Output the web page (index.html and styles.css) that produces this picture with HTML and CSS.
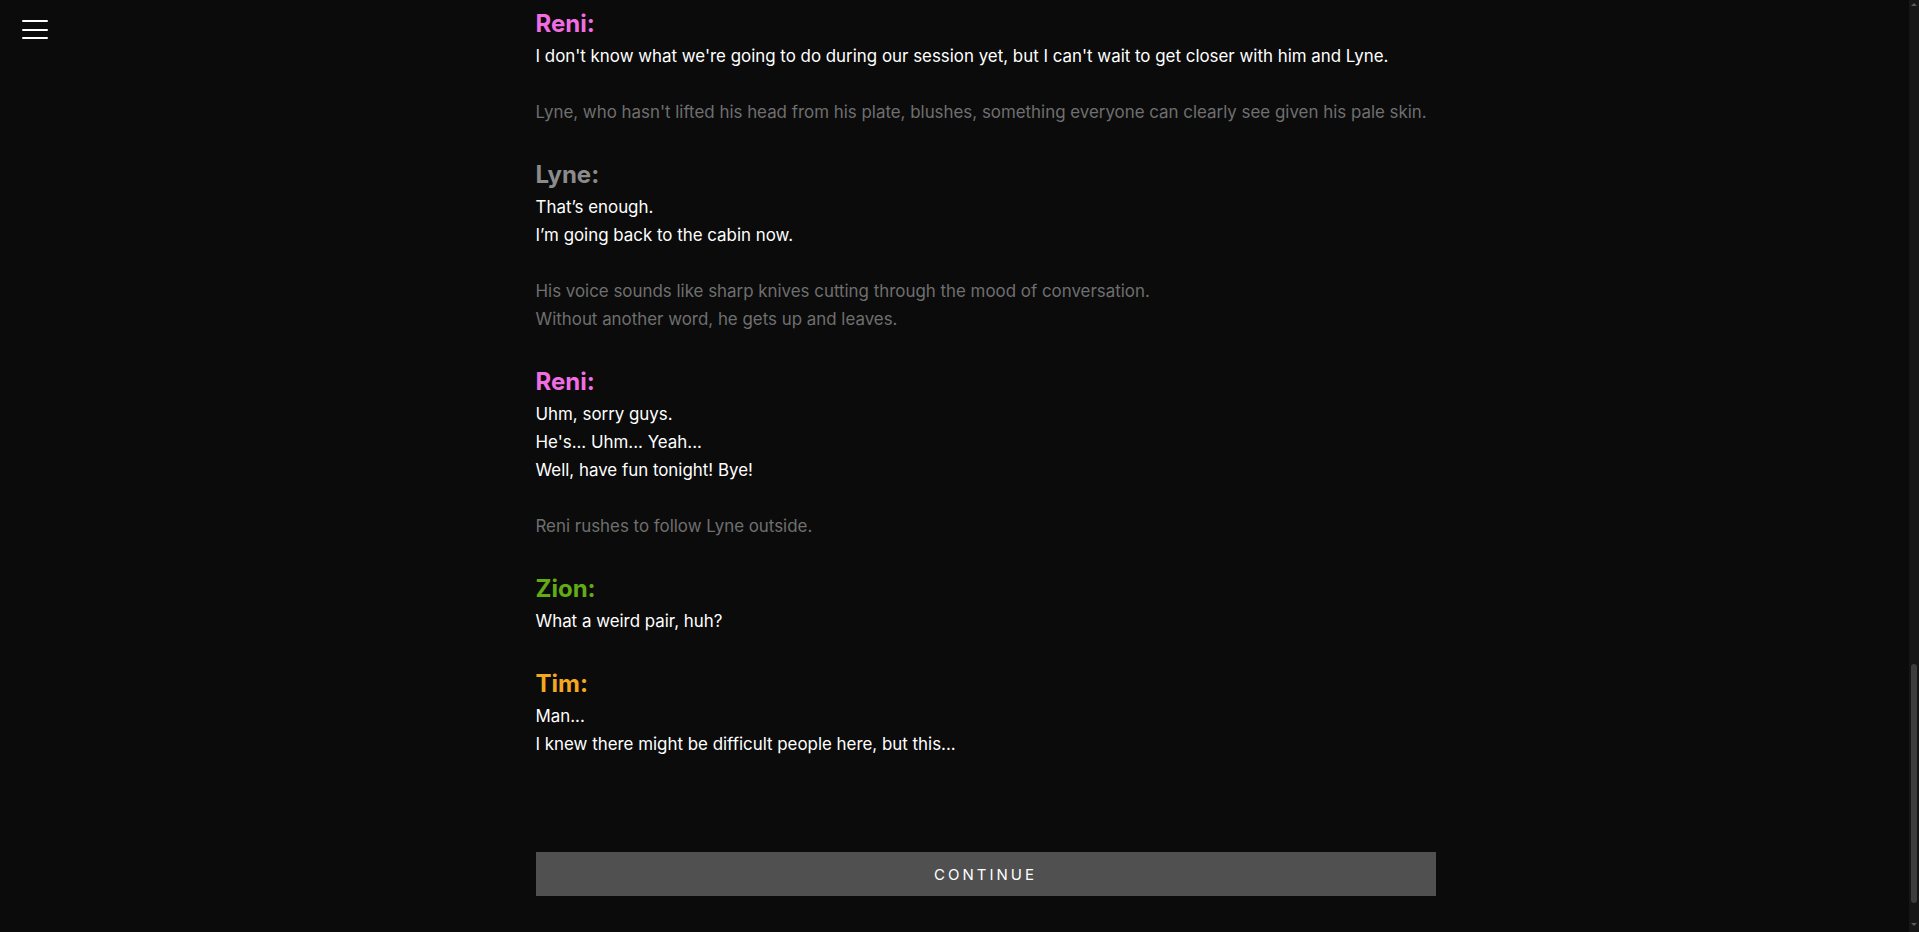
FILE: index.html
```html
<!DOCTYPE html>
<html lang="en">
<head>
<meta charset="utf-8">
<title>Story</title>
<link rel="stylesheet" href="styles.css">
</head>
<body>
<button class="menu" aria-label="Menu"><span></span><span></span><span></span></button>
<div class="scroller">
  <div class="page">
    <div class="earlier"></div>
    <main class="story">
      <section class="speech">
        <h3 class="name reni">Reni:</h3>
        <p>I don't know what we're going to do during our session yet, but I can't wait to get closer with him and Lyne.</p>
      </section>
      <div class="narration">
        <p>Lyne, who hasn't lifted his head from his plate, blushes, something everyone can clearly see given his pale skin.</p>
      </div>
      <section class="speech">
        <h3 class="name lyne">Lyne:</h3>
        <p>That’s enough.</p>
        <p>I’m going back to the cabin now.</p>
      </section>
      <div class="narration">
        <p>His voice sounds like sharp knives cutting through the mood of conversation.</p>
        <p>Without another word, he gets up and leaves.</p>
      </div>
      <section class="speech">
        <h3 class="name reni">Reni:</h3>
        <p>Uhm, sorry guys.</p>
        <p>He's... Uhm... Yeah...</p>
        <p>Well, have fun tonight! Bye!</p>
      </section>
      <div class="narration">
        <p>Reni rushes to follow Lyne outside.</p>
      </div>
      <section class="speech">
        <h3 class="name zion">Zion:</h3>
        <p>What a weird pair, huh?</p>
      </section>
      <section class="speech">
        <h3 class="name tim">Tim:</h3>
        <p>Man...</p>
        <p>I knew there might be difficult people here, but this...</p>
      </section>
      <button class="continue">Continue</button>
    </main>
  </div>
</div>
<div class="scrollbar" aria-hidden="true">
  <span class="arrow up"></span>
  <div class="track"><div class="thumb"></div></div>
  <span class="arrow down"></span>
</div>
</body>
</html>
```
FILE: styles.css
```css
html, body {
  margin: 0;
  padding: 0;
  height: 100%;
  background: #0b0b0b;
  overflow: hidden;
}

body {
  font-family: Inter, "Open Sans", "DejaVu Sans", sans-serif;
  color: #ffffff;
}

.scroller {
  height: 100vh;
  overflow-y: scroll;
  display: flex;
  flex-direction: column-reverse;
}

.page {
  flex: none;
  padding: 0 0 36px 52px;
}

.earlier {
  height: 2560px;
}

.story {
  width: 900px;
  margin: 0 auto;
  display: flex;
  flex-direction: column;
}

.menu {
  position: fixed;
  top: 20px;
  left: 22px;
  width: 26px;
  height: 19px;
  padding: 0;
  border: 0;
  background: transparent;
  display: flex;
  flex-direction: column;
  justify-content: space-between;
  z-index: 2;
}

.menu span {
  display: block;
  height: 2px;
  background: #ffffff;
  border-radius: 1px;
}

/* decorative page scrollbar */
.scrollbar {
  position: fixed;
  top: 0;
  right: 0;
  width: 10px;
  height: 100vh;
  background: #161616;
  display: flex;
  flex-direction: column;
  align-items: center;
  z-index: 3;
}

.track {
  flex: 1;
  align-self: stretch;
  display: flex;
  flex-direction: column;
  justify-content: flex-end;
  align-items: center;
  padding-bottom: 20px;
}

.thumb {
  width: 6px;
  height: 239px;
  background: #3d3d3d;
  border-radius: 3px;
}

.arrow {
  width: 0;
  height: 0;
  border-left: 3px solid transparent;
  border-right: 3px solid transparent;
}

.arrow.up {
  margin: 3px 0 9px;
  border-bottom: 3px solid #5a5a5a;
}

.arrow.down {
  margin: 0 0 6px;
  border-top: 3px solid #5a5a5a;
}

.speech {
  margin-top: 31px;
}

.speech:first-child {
  margin-top: 0;
}

.narration {
  margin-top: 28px;
  color: #6f6f6f;
}

.name {
  margin: 2px 0 2px;
  font-size: 24px;
  line-height: 32px;
  font-weight: 700;
}

.reni { color: #f06ee2; }
.lyne { color: #8b8b8b; }
.zion { color: #63ab15; }
.tim  { color: #f4a81d; }

p {
  margin: 0;
  font-size: 16.9px;
  line-height: 28px;
}

.continue {
  margin-top: 94px;
  height: 44px;
  border: 0;
  background: #505050;
  color: #ffffff;
  font-family: Inter, "Open Sans", sans-serif;
  font-size: 15px;
  letter-spacing: 3px;
  text-transform: uppercase;
}
```
